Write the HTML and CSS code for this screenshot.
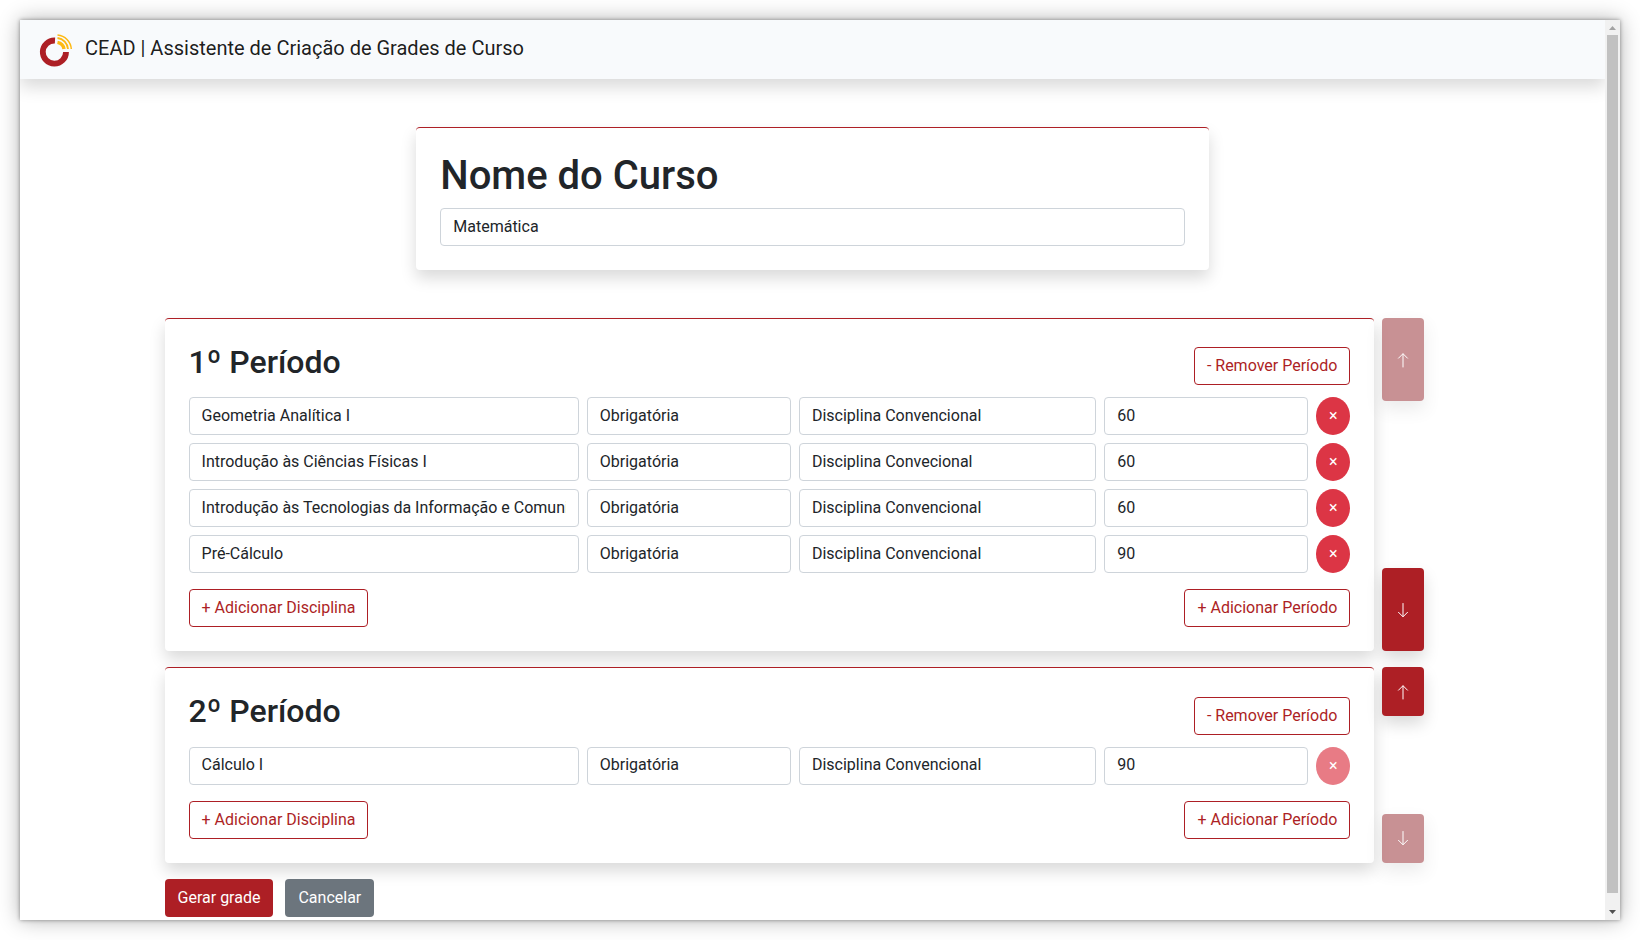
FILE: index.html
```html
<!DOCTYPE html>
<html lang="pt-BR">
<head>
<meta charset="utf-8">
<title>CEAD | Assistente de Criação de Grades de Curso</title>
<link rel="stylesheet" href="styles.css">
</head>
<body>
<div class="frame">
  <div class="page">
    <header class="navbar">
      <svg class="logo" viewBox="0 0 32 32" aria-hidden="true">
        <path d="M15 6.500A11.600 11.600 0 1 0 26 18" fill="none" stroke="#ad1f25" stroke-width="5.800"/>
        <g fill="none" stroke="#fdb913">
          <path d="M17.500 8.300A8 8 0 0 1 24 15" stroke-width="3.400"/>
          <path d="M17.500 4A12 12 0 0 1 28 15" stroke-width="1.800"/>
          <path d="M17.500 1A15 15 0 0 1 31.300 15" stroke-width="1.500"/>
        </g>
      </svg>
      <span class="brand">CEAD | Assistente de Criação de Grades de Curso</span>
    </header>
    <main>
      <section class="card course">
        <h1><label for="curso">Nome do Curso</label></h1>
        <input class="field" id="curso" type="text" value="Matemática">
      </section>
      <div class="periods">
        <div class="period">
          <section class="card">
            <div class="period-head">
              <h2>1º Período</h2>
              <button class="btn outline" type="button">- Remover Período</button>
            </div>
            <div class="rows">
              <div class="row">
                <input class="field" aria-label="Disciplina" type="text" value="Geometria Analítica I">
                <input class="field" aria-label="Natureza" type="text" value="Obrigatória">
                <input class="field" aria-label="Tipo" type="text" value="Disciplina Convencional">
                <input class="field" aria-label="Carga horária" type="text" value="60">
                <button class="remove" type="button" aria-label="Remover disciplina">×</button>
              </div>
              <div class="row">
                <input class="field" aria-label="Disciplina" type="text" value="Introdução às Ciências Físicas I">
                <input class="field" aria-label="Natureza" type="text" value="Obrigatória">
                <input class="field" aria-label="Tipo" type="text" value="Disciplina Convecional">
                <input class="field" aria-label="Carga horária" type="text" value="60">
                <button class="remove" type="button" aria-label="Remover disciplina">×</button>
              </div>
              <div class="row">
                <input class="field" aria-label="Disciplina" type="text" value="Introdução às Tecnologias da Informação e Comunicação">
                <input class="field" aria-label="Natureza" type="text" value="Obrigatória">
                <input class="field" aria-label="Tipo" type="text" value="Disciplina Convencional">
                <input class="field" aria-label="Carga horária" type="text" value="60">
                <button class="remove" type="button" aria-label="Remover disciplina">×</button>
              </div>
              <div class="row">
                <input class="field" aria-label="Disciplina" type="text" value="Pré-Cálculo">
                <input class="field" aria-label="Natureza" type="text" value="Obrigatória">
                <input class="field" aria-label="Tipo" type="text" value="Disciplina Convencional">
                <input class="field" aria-label="Carga horária" type="text" value="90">
                <button class="remove" type="button" aria-label="Remover disciplina">×</button>
              </div>
            </div>
            <div class="period-foot">
              <button class="btn outline" type="button">+ Adicionar Disciplina</button>
              <button class="btn outline" type="button">+ Adicionar Período</button>
            </div>
          </section>
          <div class="movers">
            <button class="mover" type="button" aria-label="Mover para cima" disabled>
              <svg viewBox="0 0 16 16"><path d="M8 15V2M3.500 6.200L8 1.700l4.500 4.500"/></svg>
            </button>
            <button class="mover" type="button" aria-label="Mover para baixo">
              <svg viewBox="0 0 16 16"><path d="M8 1.500v13M3.500 10.300L8 14.800l4.500-4.500"/></svg>
            </button>
          </div>
        </div>
        <div class="period">
          <section class="card">
            <div class="period-head">
              <h2>2º Período</h2>
              <button class="btn outline" type="button">- Remover Período</button>
            </div>
            <div class="rows">
              <div class="row">
                <input class="field" aria-label="Disciplina" type="text" value="Cálculo I">
                <input class="field" aria-label="Natureza" type="text" value="Obrigatória">
                <input class="field" aria-label="Tipo" type="text" value="Disciplina Convencional">
                <input class="field" aria-label="Carga horária" type="text" value="90">
                <button class="remove" type="button" aria-label="Remover disciplina" disabled>×</button>
              </div>
            </div>
            <div class="period-foot">
              <button class="btn outline" type="button">+ Adicionar Disciplina</button>
              <button class="btn outline" type="button">+ Adicionar Período</button>
            </div>
          </section>
          <div class="movers">
            <button class="mover" type="button" aria-label="Mover para cima">
              <svg viewBox="0 0 16 16"><path d="M8 15V2M3.500 6.200L8 1.700l4.500 4.500"/></svg>
            </button>
            <button class="mover" type="button" aria-label="Mover para baixo" disabled>
              <svg viewBox="0 0 16 16"><path d="M8 1.500v13M3.500 10.300L8 14.800l4.500-4.500"/></svg>
            </button>
          </div>
        </div>
        <div class="actions">
          <button class="btn primary" type="button">Gerar grade</button>
          <button class="btn secondary" type="button">Cancelar</button>
        </div>
      </div>
    </main>
  </div>
  <div class="scrollbar" aria-hidden="true">
    <svg class="arrow up" viewBox="0 0 15 15"><path d="M4 10h7L7.500 6z"/></svg>
    <div class="thumb"></div>
    <svg class="arrow" viewBox="0 0 15 15"><path d="M4 5h7L7.500 9z"/></svg>
  </div>
</div>
</body>
</html>
```
FILE: styles.css
```css
* {
  box-sizing: border-box;
}

body {
  margin: 0;
  padding: 20px;
  background: #fff;
  color: #212529;
  font-family: Roboto, "Liberation Sans", sans-serif;
  font-size: 16px;
  line-height: 24px;
}

.frame {
  display: flex;
  min-height: calc(100vh - 40px);
  background: #fff;
  box-shadow: 0 0 20px rgba(0, 0, 0, 0.3), 0 0 4px rgba(0, 0, 0, 0.4);
}

.page {
  flex: 1;
  min-width: 0;
  overflow: hidden;
}

.navbar {
  display: flex;
  align-items: center;
  gap: 13px;
  height: 59px;
  padding: 0 20px;
  background: #f8fafc;
  box-shadow: 0 8px 16px rgba(0, 0, 0, 0.15);
}

.logo {
  width: 32px;
  height: 32px;
  overflow: visible;
}

.brand {
  padding-bottom: 4px;
  color: rgba(0, 0, 0, 0.9);
  font-size: 20px;
  line-height: 30px;
}

.card {
  padding: 24px;
  border-top: 1px solid #ad1f25;
  border-radius: 4px;
  background: #fff;
  box-shadow: 0 8px 16px rgba(0, 0, 0, 0.15);
}

.course {
  width: 50%;
  margin: 48px auto;
}

h1,
h2 {
  margin: 0 0 8px;
  font-weight: 500;
  line-height: 1.2;
}

h1 {
  font-size: 40px;
}

h2 {
  font-size: 32px;
}

.field {
  display: block;
  width: 100%;
  min-width: 0;
  height: 38px;
  padding: 5px 12px 7px;
  border: 1px solid #ced4da;
  border-radius: 4px;
  background: #fff;
  color: #212529;
  font: inherit;
}

.periods {
  display: flex;
  flex-direction: column;
  gap: 16px;
  margin-left: 9.12%;
  margin-right: 11.4%;
}

.period {
  display: grid;
  grid-template-columns: 1fr 42px;
  gap: 8px;
}

.period-head {
  display: flex;
  align-items: center;
  justify-content: space-between;
  margin-bottom: 8px;
}

.rows {
  display: flex;
  flex-direction: column;
  gap: 8px;
}

.row {
  display: grid;
  grid-template-columns: 390fr 204fr 297fr 204fr 34px;
  gap: 8px;
}

.period-foot {
  display: flex;
  justify-content: space-between;
  margin-top: 16px;
}

.btn {
  height: 38px;
  padding: 6px 12px;
  border: 1px solid transparent;
  border-radius: 4px;
  font: inherit;
}

.outline {
  border-color: #ad1f25;
  background: transparent;
  color: #ad1f25;
}

.primary {
  background: #ad1f25;
  color: #fff;
}

.secondary {
  background: #6c757d;
  color: #fff;
}

.remove {
  height: 38px;
  padding: 0;
  border: 0;
  border-radius: 50%;
  background: #dc3545;
  color: #fff;
  font: inherit;
}

.remove:disabled {
  opacity: 0.65;
}

.movers {
  display: flex;
  flex-direction: column;
  justify-content: space-between;
}

.mover {
  display: flex;
  align-items: center;
  justify-content: center;
  height: 25%;
  padding: 0;
  border: 0;
  border-radius: 4px;
  background: #ad1f25;
  box-shadow: 0 8px 16px rgba(0, 0, 0, 0.15);
}

.mover:disabled {
  background: #93252b;
  opacity: 0.5;
}

.mover svg {
  width: 16px;
  height: 16px;
  fill: none;
  stroke: #fff;
  stroke-width: 1;
  stroke-linecap: round;
  stroke-linejoin: round;
}

.actions {
  display: flex;
  gap: 12px;
}

.scrollbar {
  display: flex;
  flex-direction: column;
  align-items: center;
  width: 15px;
  background: #f1f1f1;
}

.thumb {
  flex: 1;
  width: 11px;
  margin-bottom: 12px;
  background: #c1c1c1;
}

.arrow {
  width: 15px;
  height: 15px;
  fill: #505050;
}

.up {
  fill: #a3a3a3;
}
```
